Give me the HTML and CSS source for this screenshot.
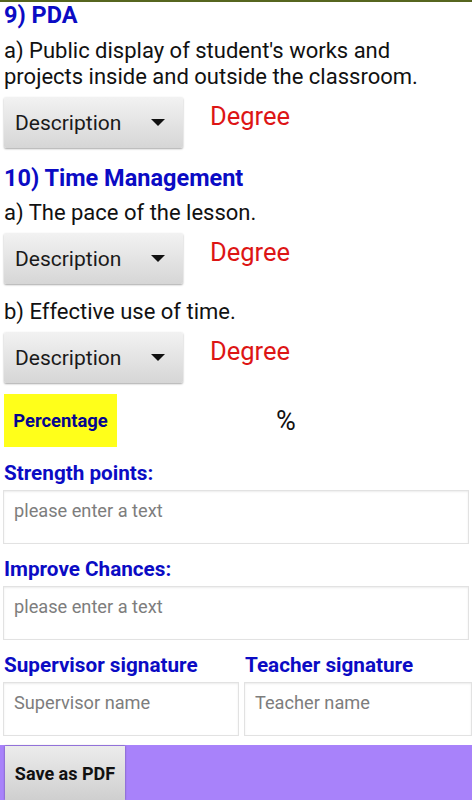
FILE: index.html
```html
<!DOCTYPE html>
<html lang="en">
<head>
    <meta charset="UTF-8">
    <meta name="viewport" content="width=device-width, initial-scale=1.0">
    <title>Evaluation form</title>
    <link rel="stylesheet" href="styles.css">
</head>
<body>
    <div class="form">
        <h2 class="section first">9) PDA</h2>
        <p class="question">a) Public display of student's works and projects inside and outside the classroom.</p>
        <div class="rate-row">
            <div class="spinner">Description <span class="arrow"></span></div>
            <div class="degree">Degree</div>
        </div>

        <h2 class="section">10) Time Management</h2>
        <p class="question">a) The pace of the lesson.</p>
        <div class="rate-row">
            <div class="spinner">Description <span class="arrow"></span></div>
            <div class="degree">Degree</div>
        </div>
        <p class="question">b) Effective use of time.</p>
        <div class="rate-row">
            <div class="spinner">Description <span class="arrow"></span></div>
            <div class="degree">Degree</div>
        </div>

        <div class="percent-row">
            <div class="percent-btn">Percentage</div>
            <div class="percent-value">%</div>
        </div>

        <h3 class="label">Strength points:</h3>
        <div class="field">please enter a text</div>

        <h3 class="label">Improve Chances:</h3>
        <div class="field">please enter a text</div>

        <div class="signatures">
            <div class="sig">
                <h3 class="label">Supervisor signature</h3>
                <div class="field">Supervisor name</div>
            </div>
            <div class="sig">
                <h3 class="label">Teacher signature</h3>
                <div class="field">Teacher name</div>
            </div>
        </div>
    </div>
    <div class="footer">
        <div class="save-btn">Save as PDF</div>
    </div>
</body>
</html>
```
FILE: styles.css
```css
body {
    margin: 0;
    font-family: Roboto, "Noto Sans", sans-serif;
    background: #fff;
    border-top: 2px solid #56651f;
    height: 798px;
    display: flex;
    flex-direction: column;
    overflow: hidden;
}
.form {
    flex: 1;
    padding: 0 3px 0 4px;
}
.section {
    margin: 17px 0 0;
    color: #0b0bc4;
    font-size: 23.5px;
    font-weight: bold;
    line-height: 26px;
}
.section.first {
    margin-top: 0;
}
.question {
    margin: 9px 0 0;
    font-size: 22px;
    line-height: 26px;
    color: #111;
}
.section.first + .question {
    margin-top: 10px;
}
.rate-row + .question {
    margin-top: 15px;
}
.rate-row {
    display: flex;
    align-items: flex-start;
    margin-top: 7px;
}
.spinner {
    width: 179px;
    height: 51px;
    box-sizing: border-box;
    padding-left: 11px;
    display: flex;
    align-items: center;
    font-size: 21px;
    color: #1a1a1a;
    background: linear-gradient(to bottom, #f2f2f2, #d6d6d6);
    border-radius: 2px;
    box-shadow: 0 1px 2px rgba(0, 0, 0, 0.35);
}
.arrow {
    margin-left: 30px;
    width: 0;
    height: 0;
    border-left: 7px solid transparent;
    border-right: 7px solid transparent;
    border-top: 7px solid #111;
}
.degree {
    margin-left: 27px;
    margin-top: 4px;
    font-size: 25.5px;
    line-height: 30px;
    color: #dd1515;
}
.percent-row {
    display: flex;
    align-items: center;
    margin-top: 11px;
}
.percent-btn {
    width: 113px;
    height: 53px;
    display: flex;
    align-items: center;
    justify-content: center;
    background: #ffff1a;
    color: #05058f;
    font-size: 18.4px;
    font-weight: bold;
}
.percent-value {
    margin-left: 159px;
    font-size: 27px;
    color: #111;
}
.label {
    margin: 14px 0 0;
    color: #0b0bc4;
    font-size: 20.7px;
    font-weight: bold;
    line-height: 24px;
}
.field {
    margin: 5px 0 0 -1px;
    height: 54px;
    box-sizing: border-box;
    padding: 9px 10px;
    border: 1px solid #e2e2e2;
    box-shadow: inset 0 1px 2px rgba(0, 0, 0, 0.08);
    color: #7d7d7d;
    font-size: 18.2px;
    line-height: 22px;
}
.field + .label {
    margin-top: 13px;
}
.signatures {
    display: flex;
    gap: 6px;
    margin-right: -3px;
}
.signatures .label {
    margin-top: 13px;
}
.signatures .field {
    margin-top: 5px;
}
.sig {
    flex: 0 0 235px;
}
.sig + .sig {
    flex: 1;
}
.footer {
    height: 55px;
    background: #a882fa;
    padding-left: 5px;
    display: flex;
}
.save-btn {
    width: 120px;
    margin-top: 1px;
    display: flex;
    align-items: center;
    justify-content: center;
    background: linear-gradient(to bottom, #ececec, #cfcfcf);
    box-shadow: 0 0 2px rgba(0, 0, 0, 0.4);
    font-size: 18px;
    font-weight: bold;
    color: #111;
}
```
